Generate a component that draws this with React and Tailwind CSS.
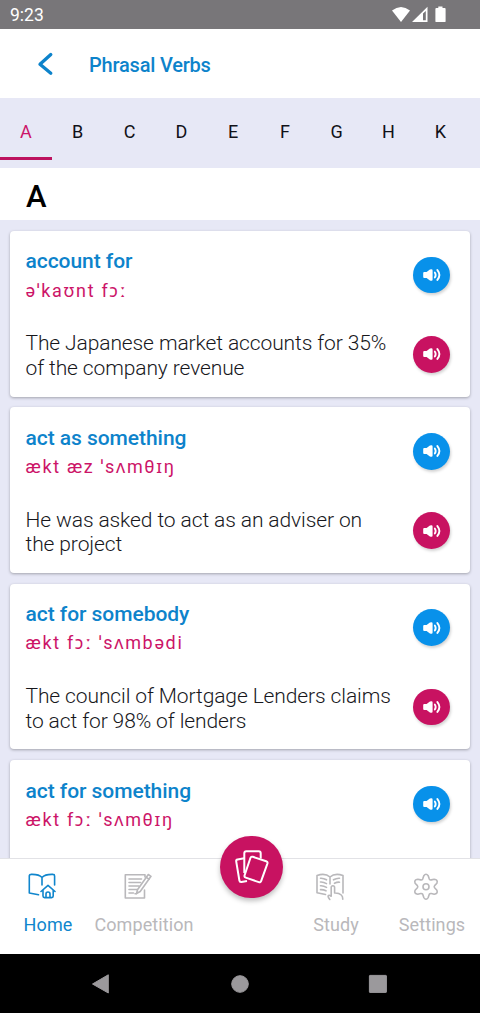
const letters = ['A', 'B', 'C', 'D', 'E', 'F', 'G', 'H', 'K']

const verbs = [
  {
    title: 'account for',
    phonetic: 'əˈkaʊnt fɔː',
    lines: ['The Japanese market accounts for 35%', 'of the company revenue']
  },
  {
    title: 'act as something',
    phonetic: 'ækt æz ˈsʌmθɪŋ',
    lines: ['He was asked to act as an adviser on', 'the project']
  },
  {
    title: 'act for somebody',
    phonetic: 'ækt fɔː ˈsʌmbədi',
    lines: ['The council of Mortgage Lenders claims', 'to act for 98% of lenders']
  },
  {
    title: 'act for something',
    phonetic: 'ækt fɔː ˈsʌmθɪŋ',
    lines: []
  }
]

function StatusBar() {
  return (
    <div className="h-[29px] shrink-0 bg-[#787679] flex items-center justify-between pl-[10px] pr-[34px] text-white">
      <span className="text-[17.5px] leading-none pt-[2px]">9:23</span>
      <svg width="54" height="17" viewBox="0 0 54 17" fill="currentColor">
        <path d="M0 4.6Q9 -2.6 18 4.6L9 16Z" />
        <path fillRule="evenodd" d="M20 16L35.5 0.8V16ZM31 7.6V14.2H33.8V4.9Z" />
        <path d="M46.3 0.5h4.2v1.6h2.2q.9 0 .9.9v12.2q0 .9-.9.9h-8.4q-.9 0-.9-.9V3q0-.9.9-.9h2Z" />
      </svg>
    </div>
  )
}

function Header() {
  return (
    <header className="h-[69px] shrink-0 flex items-center pl-[37px] text-[#0d83cb]">
      <svg width="17" height="24" viewBox="0 0 17 24" fill="none" stroke="currentColor" strokeWidth="3.3" strokeLinecap="round" strokeLinejoin="round">
        <path d="M13.8 2.5L3 12.3L13.8 21.3" />
      </svg>
      <h1 className="ml-[35px] pt-[3px] text-[20px] font-medium leading-none tracking-[-0.2px]">Phrasal Verbs</h1>
    </header>
  )
}

function LetterTabs() {
  return (
    <nav className="h-[70px] shrink-0 bg-[#e7e8f6] flex">
      {letters.map((letter) => (
        <div
          key={letter}
          className={`w-[51.8px] shrink-0 h-[62px] pt-[7px] flex items-center justify-center text-[18px] border-b-[3px] ${
            letter === 'A' ? 'text-[#cc1468] border-[#bd125f]' : 'text-[#111118] border-transparent'
          }`}
        >
          {letter}
        </div>
      ))}
    </nav>
  )
}

function SoundButton({ className }) {
  return (
    <button className={`size-[36.6px] shrink-0 rounded-full flex items-center justify-center text-white shadow-[1px_2px_3px_rgba(0,0,0,0.18)] ${className}`}>
      <svg width="18" height="12" viewBox="0 0 18 12" fill="none" stroke="currentColor" strokeLinecap="round">
        <path d="M1.2 2.9H3.6L6.9 0.6Q9.6 -0.7 9.6 1.6V10.4Q9.6 12.7 6.9 11.4L3.6 9.1H1.2Q0.2 9.1 0.2 8.1V3.9Q0.2 2.9 1.2 2.9Z" fill="currentColor" stroke="none" />
        <path d="M11.8 3.4Q13.6 6 11.8 8.6" strokeWidth="1.8" />
        <path d="M14.4 1.1Q18.4 6 14.4 10.9" strokeWidth="1.9" />
      </svg>
    </button>
  )
}

function VerbCard({ verb }) {
  return (
    <article className="h-[165.6px] shrink-0 bg-white rounded-[4px] pl-[15.5px] pr-5 flex justify-between shadow-[0_1px_3px_rgba(0,0,0,0.3)]">
      <div className="whitespace-nowrap">
        <h3 className="mt-[18.4px] text-[21px] leading-[25px] font-medium tracking-[-0.05px] text-[#0d83cb]">{verb.title}</h3>
        <p className="mt-[5.2px] text-[18px] leading-[22px] tracking-[1.68px] text-[#cc1468]">{verb.phonetic}</p>
        <div className="mt-[29.8px] text-[21px] leading-[24.5px] font-light tracking-[-0.11px] text-[#17171c]">
          {verb.lines.map((line) => (
            <p key={line}>{line}</p>
          ))}
        </div>
      </div>
      <div className="pt-[25.6px] flex flex-col gap-[42.8px]">
        <SoundButton className="bg-[#0891ea]" />
        <SoundButton className="bg-[#c81261]" />
      </div>
    </article>
  )
}

function HomeIcon() {
  return (
    <>
      <path d="M10.5 21.8L1.3 20V3Q1.3 1.4 3 1.4C8 1.2 11.5 1.7 14 4.5C16.5 1.7 20 1.2 25 1.4Q26.6 1.4 26.6 3V12M14 4.5V12" />
      <path d="M13 18.5L20 12.4L27 18.5M15 17.2V23Q15 24.6 16.6 24.6H23.6Q25.2 24.6 25.2 23V17.2M18 24.4V21Q18 19 20 19T22 21V24.4" />
    </>
  )
}

function CompetitionIcon() {
  return (
    <>
      <path d="M21 4V1.8H1.3V25H20.5V17" />
      <path d="M5 6H17.5M5 9.5H16.5M5 13H15M5 16.5H13M5 20H9.5M12.5 20.5L13.5 16.8L24.3 1.5L27 3.3L16.2 18.5Z" />
      <path d="M22.3 4.3L25 6.2M11 20.7H12.5" />
    </>
  )
}

function StudyIcon() {
  return (
    <>
      <path d="M9.5 21.5L1 19.7V2.4C6 .8 10.5 .8 14 4C17.5 .8 22 .8 27 2.4V20M14 4V11" />
      <path d="M4.5 5.2Q7.5 5 10.5 6.8M4.5 9Q7.5 8.8 10.5 10.6M4.5 12.8Q7.5 12.6 10.5 14.4M4.5 16.6Q7.5 16.5 10 17.8M17.5 6.8Q20.5 5 23.5 5.2M18.5 10.3Q21 9 23.5 9.2" />
      <path d="M15.2 20V14.5Q15.2 12.7 16.9 12.7T18.6 14.5V20Q23 19.8 25.3 22Q26.8 23.3 26.8 26.2M15.2 20V23.3Q12.3 21.3 12.1 23.2Q12.1 24.3 13.8 26.5" />
    </>
  )
}

function SettingsIcon() {
  return (
    <>
      <circle cx="14" cy="13.7" r="3" />
      <path d="M11.8 2.8Q14 -.4 16.2 2.8L17.3 6.1Q18 7.2 19.3 6.9L22.2 6.2Q26.2 6.7 24.9 10.2L22.6 12.6Q21.8 13.7 22.6 14.8L24.9 17.2Q26.2 20.7 22.2 21.2L19.3 20.5Q18 20.2 17.3 21.3L16.2 24.6Q14 27.8 11.8 24.6L10.7 21.3Q10 20.2 8.7 20.5L5.8 21.2Q1.8 20.7 3.1 17.2L5.4 14.8Q6.2 13.7 5.4 12.6L3.1 10.2Q1.8 6.7 5.8 6.2L8.7 6.9Q10 7.2 10.7 6.1Z" />
    </>
  )
}

const navItems = [
  { label: 'Home', icon: HomeIcon, color: 'text-[#1086cd]' },
  { label: 'Competition', icon: CompetitionIcon, color: 'text-[#b9b8bb]' },
  { label: 'Cards' },
  { label: 'Study', icon: StudyIcon, color: 'text-[#b9b8bb]' },
  { label: 'Settings', icon: SettingsIcon, color: 'text-[#b9b8bb]' }
]

function BottomNav() {
  return (
    <nav className="relative h-[96px] shrink-0 bg-white border-t border-[#e2e2e6] grid grid-cols-5">
      {navItems.map((item) => {
        const Icon = item.icon
        return Icon ? (
          <div key={item.label} className={`flex flex-col items-center pt-[13.5px] ${item.color}`}>
            <svg className="mr-[12px]" width="28" height="28" viewBox="0 0 28 28" fill="none" stroke="currentColor" strokeWidth="1.6" strokeLinecap="round" strokeLinejoin="round">
              <Icon />
            </svg>
            <span className="mt-[13px] text-[18px] leading-[22px] tracking-[0.1px]">{item.label}</span>
          </div>
        ) : (
          <div key={item.label} />
        )
      })}
      <button className="absolute left-[220.3px] -top-[23.3px] size-[62.5px] rounded-full bg-[#c81261] flex items-center justify-center text-white shadow-[0_3px_5px_rgba(0,0,0,0.25)]">
        <svg width="36" height="36" viewBox="0 0 36 36" fill="none" stroke="currentColor" strokeWidth="2" strokeLinejoin="round">
          <path d="M10.2 9.2L3.6 10.4Q1.9 10.7 2.2 12.4L5.4 31.5Q5.7 33.3 7.5 33L13 32" />
          <path d="M10.3 24V4.3Q10.3 2.3 12.3 2.3H24.7Q26.7 2.3 26.7 4.3V9.5" />
          <path d="M18.8 7.8L32.2 12.2Q34 12.8 33.4 14.6L27.2 31.9Q26.6 33.7 24.8 33.1L11.8 28.6Q10 28 10.6 26.2L16.4 9Q17 7.2 18.8 7.8Z" />
        </svg>
      </button>
    </nav>
  )
}

function SystemBar() {
  return (
    <div className="h-[59px] shrink-0 bg-black text-[#9b999c]">
      <svg width="480" height="59" viewBox="0 0 480 59" fill="currentColor" stroke="currentColor" strokeLinejoin="round">
        <path d="M92.5 30L108.3 20.8V39Z" />
        <circle cx="240" cy="30" r="8.3" />
        <rect x="369.4" y="21.4" width="17" height="17" rx="0.5" />
      </svg>
    </div>
  )
}

export default function App() {
  return (
    <div className="w-[480px] h-[1013px] flex flex-col overflow-hidden bg-white font-[Roboto,'Noto_Sans',sans-serif]">
      <StatusBar />
      <Header />
      <LetterTabs />
      <h2 className="h-[52px] shrink-0 pl-[26px] pt-[4px] flex items-center text-[31px] leading-none font-medium text-black">A</h2>
      <main className="flex-1 min-h-0 overflow-hidden bg-[#e7e8f6] px-[10px] pt-[11px] flex flex-col gap-[10.8px]">
        {verbs.map((verb) => (
          <VerbCard key={verb.title} verb={verb} />
        ))}
      </main>
      <BottomNav />
      <SystemBar />
    </div>
  )
}
